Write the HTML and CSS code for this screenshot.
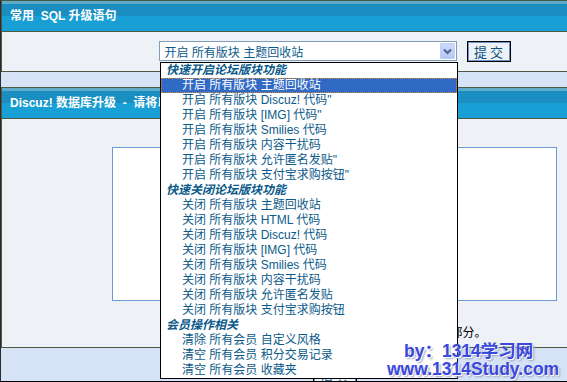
FILE: index.html
```html
<!DOCTYPE html>
<html lang="zh-CN">
<head>
<meta charset="UTF-8" />
<title>Discuz! 数据库升级</title>
<link rel="stylesheet" href="styles.css">
</head>
<body>
<div class="page">

  <!-- 常用语句 -->
  <section class="panel">
    <h2 class="panel-head">常用&nbsp; SQL 升级语句</h2>
    <div class="panel-body">
      <div class="label-col"></div>
      <div class="main-col">
        <form class="sql-form">
          <div class="select-box">
            <span class="select-value">开启 所有版块 主题回收站</span>
            <span class="select-arrow">
              <svg width="15" height="16" viewBox="0 0 15 16"><path d="M4 6.5 L7.5 10 L11 6.5" fill="none" stroke="#4d6185" stroke-width="2"/></svg>
            </span>
          </div>
          <button type="button" class="btn-submit">提 交</button>
        </form>
      </div>
    </div>
  </section>

  <!-- 数据库升级 -->
  <section class="panel panel-upgrade">
    <h2 class="panel-head">Discuz! 数据库升级&nbsp; -&nbsp; 请将以下语句粘贴到输入框</h2>
    <div class="panel-body">
      <div class="label-col"></div>
      <div class="main-col main-stack">
        <div class="sql-area"></div>
        <p class="note">执行前请先备份数据库，本功能仅用于升级中出错部分。</p>
      </div>
    </div>
  </section>

  <div class="footer-row">
    <div class="label-col"></div>
    <div class="main-col"><button type="button" class="btn-submit">提 交</button></div>
  </div>

  <!-- 下拉菜单 -->
  <ul class="dropdown">
    <li class="group">快速开启论坛版块功能</li>
    <li class="selected">开启 所有版块 主题回收站</li>
    <li>开启 所有版块 Discuz! 代码"</li>
    <li>开启 所有版块 [IMG] 代码"</li>
    <li>开启 所有版块 Smilies 代码</li>
    <li>开启 所有版块 内容干扰码</li>
    <li>开启 所有版块 允许匿名发贴"</li>
    <li>开启 所有版块 支付宝求购按钮"</li>
    <li class="group">快速关闭论坛版块功能</li>
    <li>关闭 所有版块 主题回收站</li>
    <li>关闭 所有版块 HTML 代码</li>
    <li>关闭 所有版块 Discuz! 代码</li>
    <li>关闭 所有版块 [IMG] 代码</li>
    <li>关闭 所有版块 Smilies 代码</li>
    <li>关闭 所有版块 内容干扰码</li>
    <li>关闭 所有版块 允许匿名发贴</li>
    <li>关闭 所有版块 支付宝求购按钮</li>
    <li class="group">会员操作相关</li>
    <li>清除 所有会员 自定义风格</li>
    <li>清空 所有会员 积分交易记录</li>
    <li>清空 所有会员 收藏夹</li>
  </ul>

  <div class="watermark">
    <div class="wm-line wm-by">by：1314学习网</div>
    <div class="wm-line wm-url">www.1314Study.com</div>
  </div>

</div>
</body>
</html>
```

FILE: styles.css
```css
/* Reset */
*, *::before, *::after {
  box-sizing: border-box;
}
html, body, h2, p, ul, li, form, button {
  margin: 0;
  padding: 0;
}
ul {
  list-style: none;
}

:root {
  --line: #4b5a45;
  --page-bg: #d6e2f5;
  --panel-bg: #eef2f6;
  --text-blue: #0b5a8a;
  --field-border: #7f9db9;
}

body {
  width: 567px;
  height: 382px;
  overflow: hidden;
  background: var(--page-bg);
  font-family: "Liberation Sans", "Noto Sans CJK SC", sans-serif;
  font-size: 12px;
  color: #000;
}

.page {
  position: relative;
  height: 382px;
  border-left: 1px solid #2b2b2b;
  border-bottom: 1px solid #000;
  overflow: hidden;
}

/* Panels */
.panel {
  border: 1px solid var(--line);
  border-right: 0;
  background: var(--panel-bg);
}
.panel + .panel {
  margin-top: 15px;
}
.panel-head {
  height: 31px;
  line-height: 30px;
  padding-left: 8px;
  border-bottom: 1px solid var(--line);
  background: linear-gradient(#5fa9c9 0, #5fa9c9 3px, #1a8ec0 3px, #1a8ec0 15px, #189fd5 15px);
  color: #fff;
  font-size: 12px;
  font-weight: bold;
  white-space: nowrap;
}
.panel-body {
  display: grid;
  grid-template-columns: 110px 445px;
  height: 39px;
  padding-top: 9px;
}
.panel-upgrade .panel-body {
  height: 228px;
  padding-top: 28px;
}
.main-col {
  display: flex;
  justify-content: center;
}
.main-stack {
  flex-direction: column;
  justify-content: flex-start;
}

/* Select row */
.sql-form {
  display: flex;
  gap: 10px;
}
.select-box {
  width: 298px;
  height: 20px;
  display: flex;
  align-items: center;
  justify-content: space-between;
  padding: 1px 1px 1px 5px;
  background: #fff;
  border: 1px solid var(--field-border);
  color: var(--text-blue);
}
.select-arrow {
  width: 15px;
  height: 16px;
  display: block;
  border-radius: 2px;
  background: linear-gradient(#cddafc, #b3c6f4);
  box-shadow: inset 0 0 0 1px #bccdf6;
}
.select-arrow svg {
  display: block;
}
.btn-submit {
  width: 44px;
  height: 21px;
  border: 1px solid #000;
  box-shadow: inset 0 0 0 1px #6f93cf;
  background: var(--panel-bg);
  color: #0b4f80;
  font-family: "Noto Sans CJK SC", sans-serif;
  font-size: 13px;
  line-height: 17px;
  cursor: pointer;
}

/* Upgrade area */
.sql-area {
  height: 154px;
  background: #fff;
  border: 1px solid #6c9bd2;
}
.note {
  margin-top: 25px;
  line-height: 14px;
  text-align: center;
  padding-left: 4px;
}

.footer-row {
  display: grid;
  grid-template-columns: 111px 445px;
  padding-top: 23px;
}

/* Dropdown list */
.dropdown {
  position: absolute;
  left: 159px;
  top: 62px;
  width: 298px;
  border: 1px solid #000;
  background: #fff;
  color: var(--text-blue);
  z-index: 5;
}
.dropdown li {
  height: 15px;
  line-height: 15px;
  padding-left: 21px;
  white-space: nowrap;
}
.dropdown li.group {
  padding-left: 5px;
  font-weight: bold;
  font-style: italic;
}
.dropdown li.selected {
  background: #316ac5;
  color: #fff;
  outline: 1px dotted #d88a30;
  outline-offset: -1px;
}

/* Watermark */
.watermark {
  position: absolute;
  left: 386px;
  top: 342px;
  z-index: 10;
  color: #3a48dc;
  font-family: "Liberation Sans", "Noto Sans CJK SC", sans-serif;
  font-weight: bold;
  font-size: 17.5px;
  text-shadow: 1px 1px 0 #fff, 2px 2px 2px #9aa4c0;
  white-space: nowrap;
}
.wm-line {
  height: 18px;
  line-height: 18px;
}
.wm-by {
  padding-left: 17px;
}
```
